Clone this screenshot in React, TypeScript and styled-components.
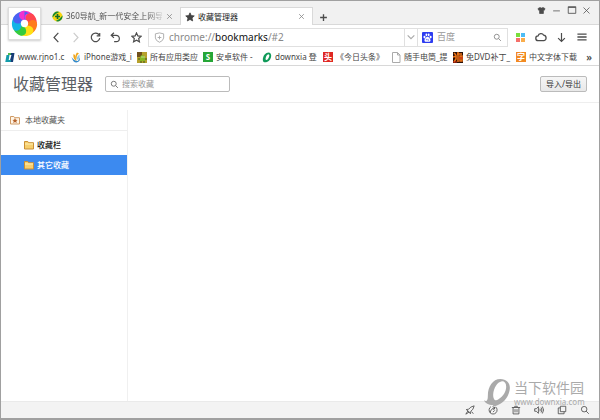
import React from 'react';
import styled, { createGlobalStyle, css } from 'styled-components';

const Global = createGlobalStyle`
  * { box-sizing: border-box; }
  body { margin: 0; background: #fff; }
  body, button, input {
    font-family: "Noto Sans", "Noto Sans CJK SC", sans-serif;
    font-size: 8px;
    line-height: 12px;
    color: #444;
  }
  button { padding: 0; border: 0; background: none; }
  svg { display: block; flex: none; }
`;

const Window = styled.div`
  position: relative;
  display: flex;
  flex-direction: column;
  min-height: 100vh;
  border: 1px solid #a0a0a0;
  border-bottom-width: 2px;
  background: #fff;
`;

const TabStrip = styled.div`
  display: flex;
  align-items: flex-end;
  height: 24px;
  padding-left: 45px;
  background: #f1f1f1;
  box-shadow: inset 0 -1px #d9d9d9;
`;

const Tab = styled.div<{ $active?: boolean }>`
  display: flex;
  align-items: center;
  gap: 3px;
  flex: 0 1 134px;
  min-width: 0;
  height: 18px;
  padding: 0 7px 0 6px;
  ${p => p.$active && css`
    flex-basis: 133px;
    padding-left: 4px;
    background: #fff;
    border: 1px solid #d9d9d9;
    border-bottom: 0;
  `}
`;

const TabTitle = styled.span<{ $fade?: boolean }>`
  flex: 1;
  min-width: 0;
  white-space: nowrap;
  color: ${p => (p.$fade ? '#555' : '#222')};
  ${p => p.$fade && css`mask-image: linear-gradient(90deg, #000 84%, #0003);`}
`;

const IconButton = styled.button<{ $w?: number }>`
  display: flex;
  align-items: center;
  justify-content: center;
  flex: none;
  width: ${p => p.$w ?? 20}px;
  height: 16px;
  color: #4c4c4c;
  &:disabled { color: #ccc; }
`;

const CloseTab = styled(IconButton)`
  color: #888;
`;

const SiteInfo = styled(IconButton)`
  color: #aaa;
`;

const WindowControls = styled.div`
  display: flex;
  align-self: flex-start;
  margin-left: auto;
  padding: 1px 5px 0 0;
`;

const Launcher = styled.button`
  position: absolute;
  top: 6px;
  left: 7px;
  display: grid;
  place-items: center;
  width: 33px;
  height: 33px;
  background: #fff;
  border: 1px solid #ddd;
  box-shadow: 0 1px 2px #0003;
`;

const Toolbar = styled.div`
  display: flex;
  align-items: center;
  height: 24px;
  padding: 0 7px 0 45px;
`;

const Omnibox = styled.div`
  display: flex;
  align-items: center;
  flex: 1;
  min-width: 0;
  height: 19px;
  margin-left: 2px;
  padding-left: 4px;
  gap: 4px;
  border: 1px solid #e0e0e0;
`;

const Address = styled.div`
  flex: 1;
  font-size: 10px;
  line-height: 16px;
  color: #888;
  white-space: nowrap;
  b { font-weight: 400; color: #111; }
`;

const DropButton = styled(IconButton)`
  height: 17px;
  color: #aaa;
  border-left: 1px solid #e0e0e0;
`;

const EngineBox = styled.label`
  display: flex;
  align-items: center;
  width: 91px;
  height: 19px;
  padding: 0 5px 0 4px;
  gap: 4px;
  border: 1px solid #e0e0e0;
  margin-left: -1px;
  color: #888;
`;

const PlainInput = styled.input<{ $size?: number }>`
  flex: 1;
  width: 0;
  min-width: 0;
  padding: 0;
  border: 0;
  outline: 0;
  background: none;
  font-size: ${p => p.$size ?? 8}px;
  &::placeholder { color: #999; opacity: 1; }
`;

const BookmarkBar = styled.nav`
  display: flex;
  align-items: center;
  height: 17px;
  padding-left: 4px;
  border-bottom: 1px solid #d8d8d8;
`;

const Bookmark = styled.a<{ $w: number }>`
  display: flex;
  align-items: center;
  gap: 3px;
  flex: 0 1 ${p => p.$w}px;
  min-width: 0;
  padding-right: 5px;
  overflow: hidden;
  white-space: nowrap;
  text-decoration: none;
  color: #444;
`;

const MoreButton = styled(IconButton)`
  font-size: 10px;
  font-weight: 600;
`;

const PageHeader = styled.header`
  display: flex;
  align-items: center;
  height: 37px;
  padding: 0 12px;
  border-bottom: 1px solid #eee;
`;

const Title = styled.h1`
  margin: 0 12px 0 0;
  font-size: 16px;
  line-height: 24px;
  font-weight: 400;
  color: #5c6166;
`;

const SearchBox = styled.label`
  display: flex;
  align-items: center;
  gap: 3px;
  flex: 0 1 125px;
  min-width: 0;
  height: 16px;
  padding: 0 4px;
  border: 1px solid #bbb;
  border-radius: 2px;
  color: #777;
`;

const ImportButton = styled.button`
  height: 16px;
  margin-left: auto;
  padding: 0 5px;
  border: 1px solid #bbb;
  border-radius: 2px;
  background: linear-gradient(#f6f6f6, #e8e8e8);
  color: #333;
`;

const Body = styled.main`
  display: flex;
  flex: 1;
  padding-top: 7px;
`;

const Sidebar = styled.aside`
  width: 127px;
  border-right: 1px solid #f0f0f0;
`;

const Root = styled.div`
  display: flex;
  align-items: center;
  gap: 5px;
  height: 21px;
  padding-left: 9px;
  margin-bottom: 4px;
  border-bottom: 1px solid #eee;
  color: #555;
`;

const Folder = styled.button<{ $selected?: boolean }>`
  display: flex;
  align-items: center;
  gap: 3px;
  width: 100%;
  height: 20px;
  padding-left: 23px;
  font-weight: 500;
  color: ${p => (p.$selected ? '#fff' : '#111')};
  background: ${p => (p.$selected ? '#3c8af0' : 'none')};
`;

const StatusBar = styled.footer`
  display: flex;
  align-items: center;
  justify-content: flex-end;
  height: 17px;
  padding-right: 3px;
  border-top: 1px solid #eaeaea;
  background: #f3f3f3;
`;

const Watermark = styled.div`
  position: absolute;
  right: 13px;
  bottom: 11px;
  display: flex;
  align-items: flex-start;
  gap: 3px;
  color: #aaa;
  pointer-events: none;
`;

const WatermarkText = styled.div`
  display: flex;
  flex-direction: column;
  width: 72px;
  font-size: 14px;
  line-height: 18px;
  small { font-size: 8px; line-height: 10px; }
`;

type StrokeProps = { d: string; size?: number; width?: number; fill?: string };
const Glyph = ({ d, size = 12, width = 1, fill = 'none' }: StrokeProps) => (
  <svg width={size} height={size} viewBox="0 0 12 12" fill={fill} stroke="currentColor" strokeWidth={width} aria-hidden="true">
    <path d={d} />
  </svg>
);

const paths = {
  back: 'M8 1 3.3 6 8 11',
  forward: 'M4 1 8.7 6 4 11',
  reload: 'M10 3.2A4.7 4.7 0 1 0 10.7 6.8M10.6 1v3.3H7.3',
  undo: 'M4.3.8 1.3 3.6l3 2.8M1.5 3.6h5.2a3.5 3.5 0 0 1 0 7H4.5',
  star: 'm6 1 1.5 3.3 3.6.4-2.7 2.4.8 3.6L6 8.9l-3.2 1.8.8-3.6L.9 4.7l3.6-.4Z',
  shield: 'M6 1 10.5 2v4.5Q10 9.7 6 11.2 2 9.7 1.5 6.5V2ZM6 4v4M4 6h4',
  down: 'M2 4l4 4 4-4',
  search: 'M8.3 5A3.3 3.3 0 1 1 1.7 5a3.3 3.3 0 0 1 6.6 0ZM7.4 7.4 10.5 10.5',
  cloud: 'M3.3 9.7a2.4 2.4 0 0 1-.2-4.800A3 3 0 0 1 8.700 4.200a2.800 2.800 0 0 1 .2 5.500Z',
  download: 'M6 1v9.3M2.3 6.600 6 10.300l3.700-3.700',
  menu: 'M.5 2.500h11M.5 6h11M.5 9.500h11',
  close: 'm2 2 8 8M10 2l-8 8',
  plus: 'M6 1.500v9M1.500 6h9',
  minus: 'M1.500 6.500h9',
  max: 'M1.500 2h9v8h-9ZM1.500 3h9',
  shirt: 'M4 2 1.300 3.500l1 2.200L3.500 5.300V10h5V5.300l1.200.4 1-2.200L8 2Q6 3.600 4 2Z',
  rocket: 'M11 1 7 2.500 4.500 5 1.500 5.500 3.500 7 5 8.500 6.500 10.500 7 7.500 9.500 5ZM3.500 7l-2.500 4L5 8.500M8 8 10 10.500',
  speed: 'M3.500 2A4.800 4.800 0 1 0 9 2.200M2.500 9.500C3 6 5 4 8 3.500M5.500 2 8.500 3.300 6.500 6M6 8.500l2-2',
  trash: 'M1 3h10M4.500 3V1.500h3V3M2.500 3v7.700h7V3M4.800 5v3.800M7.200 5v3.800',
  sound: 'M.8 4.500h2L5.300 2v8L2.800 7.500h-2ZM7 4.500q1 1.500 0 3M8.500 3q2 3 0 6M10 1.800q3 4.200 0 8.400',
  windows: 'M4 1.500h6.500V8H4ZM4 3.500H1.500v7h7V8',
};

const petals = ['#f22fd0', '#ff4650', '#ff7b1c', '#ffe016', '#35cb3c', '#12b4e6', '#4a62f2'];
const Pinwheel = () => (
  <svg width="27" height="27" viewBox="-14 -14 28 28" aria-hidden="true">
    {petals.map((c, i) => (
      <path key={c} fill={c} transform={`rotate(${(i * 360) / petals.length})`} d="M0-3C-6-4-8-11-2-13 5-14 11-9 11-3 9-6 5-6 3 0Z" />
    ))}
    <path fill={petals[0]} d="M0-3C-6-4-8-11-2-13L0-13.200Z" />
    <circle r="3.800" fill="#fff" />
  </svg>
);

const Favicon360 = () => (
  <svg width="11" height="11" viewBox="0 0 12 12" aria-hidden="true">
    <circle cx="6" cy="6" r="5.500" fill="#f7d510" />
    <path d="M.6 7A5.500 5.500 0 0 1 8 1Q3.500 2.500.6 7ZM11.400 5A5.500 5.500 0 0 1 4 11Q8.500 9.500 11.400 5Z" fill="#188a35" />
    <path d="M6 3.300v5.400M3.300 6h5.400" stroke="#126b2c" strokeWidth="1.800" />
  </svg>
);

const Paw = () => (
  <svg width="11" height="11" viewBox="0 0 12 12" aria-hidden="true">
    <rect width="12" height="12" rx="1" fill="#2d3cf0" />
    <g fill="#fff">
      <ellipse cx="2.700" cy="5.500" rx="1.100" ry="1.500" /><ellipse cx="4.800" cy="3" rx="1" ry="1.500" />
      <ellipse cx="7.300" cy="3" rx="1" ry="1.500" /><ellipse cx="9.400" cy="5.500" rx="1.100" ry="1.500" />
      <path d="M6 5.300C7.500 5.300 9.500 8 9.300 9.500 9 11 7.500 10.500 6 10.500S3 11 2.700 9.500C2.500 8 4.500 5.300 6 5.300Z" />
    </g>
    <path d="M4.800 7.500v1.500M6.500 7.500v1.500h1" stroke="#2d3cf0" fill="none" strokeWidth=".7" />
  </svg>
);

const Tiles = () => (
  <svg width="9" height="9" viewBox="0 0 9 9" aria-hidden="true">
    <path fill="#7ade3c" d="M0 0h4v4H0z" /><path fill="#4cbcf5" d="M5 0h4v4H5z" />
    <path fill="#f5706a" d="M0 5h4v4H0z" /><path fill="#f9ad4c" d="M5 5h4v4H5z" />
  </svg>
);

const FolderIcon = ({ star }: { star?: boolean }) => (
  <svg width="10" height="10" viewBox="0 0 10 10" aria-hidden="true">
    <path d="M.5 1.500h3.300l.8 1.200h4.900v6.300h-9Z" fill={star ? '#fff6e8' : '#f7cf6d'} stroke={star ? '#d09a64' : '#c98f35'} />
    {star
      ? <path d="m5 3 .8 1.700 1.800.2-1.300 1.200.4 1.800L5 7l-1.700.9.4-1.800-1.300-1.200 1.800-.2Z" fill="#b5622a" />
      : <path d="M1 4h8" stroke="#fff0b8" />}
  </svg>
);

const Tile = styled.span<{ $bg: string }>`
  display: grid;
  place-items: center;
  flex: none;
  width: 10px;
  height: 10px;
  font-size: 8px;
  line-height: 10px;
  font-weight: 700;
  color: #fff;
  background: ${p => p.$bg};
`;

const Site = ({ children }: { children: React.ReactNode }) => (
  <svg width="10" height="11" viewBox="0 0 10 11" aria-hidden="true">{children}</svg>
);

const bookmarks = [
  { w: 66, label: 'www.rjno1.c', icon: <Site><path d="M3 1h6.500L8 10H4.500L6.500 3H3Z" fill="#173d78" /><path d="M1.500 3h3L3.700 8H6l-.3 2H.3Z" fill="#159cab" /><path d="M3 1h3L5.500 3H3Z" fill="#55b94b" /></Site> },
  { w: 66, label: 'iPhone游戏_i', icon: <Site><path d="M.5 5q1.500 5.500 5 5.500 4.500-1 3-5L7 9Q3 9 .5 5Z" fill="#3289cb" /><path d="M2.500 2q-1 5 3 7L4 3ZM6 .5Q3 4 6 8 4.500 4 8 1.500Z" fill="#efa51b" /><path d="M8.500 2.500Q5 5 6 8l2.500-2Z" fill="#8fc6e6" /></Site> },
  { w: 66, label: '所有应用类应', icon: <Site><path d="M0 0h10v11H0z" fill="#b7a12d" /><path d="M0 0h5v5H0z" fill="#70501d" /><path d="M3 5q2-4 5 0v4H3Z" fill="#86b825" /><path d="M4 9v2M7 9v2M2 6v2M9 6v2" stroke="#375c13" /><path d="M4.500 5h1M6.500 5h1" stroke="#fff" /></Site> },
  { w: 59, label: '安卓软件 -', icon: <Tile $bg="#26a637">S</Tile> },
  { w: 61, label: 'downxia 登', icon: <Site><path fillRule="evenodd" d="M6.500.5C11 1 9.500 8.500 5 10Q0 11.500 1 6 2 1 6.500.5ZM6.500 2.200Q4 3 3.500 7 4 9 6 7 8.500 3 6.500 2.200Z" fill="#109a59" /></Site> },
  { w: 68, label: '《今日头条》', icon: <Tile $bg="#df2722">头</Tile> },
  { w: 62, label: '随手电筒_提', icon: <Site><path d="M1.500.5h5L9 3v7.500H1.500ZM6.500.5V3H9" fill="none" stroke="#aaa" /></Site> },
  { w: 63, label: '免DVD补丁_', icon: <Site><path d="M0 0h10v11H0z" fill="#291108" /><path d="m1 1 2 2M0 5l3-1v3l-2 3M4 2h5M5 0v10M7 4h2v5H7Z" stroke="#f27618" strokeWidth="1.500" fill="none" /><path d="M6 6h4M0 10h4" stroke="#d72a14" /></Site> },
  { w: 63, label: '中文字体下载', icon: <Tile $bg="#f28a22">字</Tile> },
];

const navButtons = [
  { name: '后退', d: paths.back, w: 20 },
  { name: '前进', d: paths.forward, w: 19, disabled: true },
  { name: '刷新', d: paths.reload, w: 20 },
  { name: '恢复', d: paths.undo, w: 21 },
  { name: '收藏', d: paths.star, w: 20 },
];

const statusButtons = [
  ['加速', paths.rocket], ['清理', paths.speed], ['回收站', paths.trash],
  ['声音', paths.sound], ['窗口', paths.windows], ['缩放', paths.search],
];

export default function App() {
  return (
    <>
      <Global />
      <Window>
        <TabStrip>
          <Tab>
            <Favicon360 />
            <TabTitle $fade>360导航_新一代安全上网导</TabTitle>
            <CloseTab $w={8} aria-label="关闭标签"><Glyph d={paths.close} size={7} width={1.4} /></CloseTab>
          </Tab>
          <Tab $active>
            <Glyph d={paths.star} size={10} fill="currentColor" />
            <TabTitle>收藏管理器</TabTitle>
            <CloseTab $w={8} aria-label="关闭标签"><Glyph d={paths.close} size={7} width={1.4} /></CloseTab>
          </Tab>
          <IconButton aria-label="新标签"><Glyph d={paths.plus} size={9} width={1.8} /></IconButton>
          <WindowControls>
            <IconButton $w={15} aria-label="皮肤"><Glyph d={paths.shirt} size={9} fill="currentColor" /></IconButton>
            <IconButton $w={15} aria-label="最小化"><Glyph d={paths.minus} size={9} /></IconButton>
            <IconButton $w={15} aria-label="最大化"><Glyph d={paths.max} size={10} /></IconButton>
            <IconButton $w={15} aria-label="关闭"><Glyph d={paths.close} size={9} /></IconButton>
          </WindowControls>
        </TabStrip>
        <Toolbar>
          {navButtons.map(b => (
            <IconButton key={b.name} $w={b.w} disabled={b.disabled} aria-label={b.name}><Glyph d={b.d} size={11} width={1.3} /></IconButton>
          ))}
          <Omnibox>
            <SiteInfo $w={12} aria-label="网站信息"><Glyph d={paths.shield} size={11} /></SiteInfo>
            <Address>chrome://<b>bookmarks</b>/#2</Address>
            <DropButton $w={13} aria-label="历史地址"><Glyph d={paths.down} size={10} width={1.4} /></DropButton>
          </Omnibox>
          <EngineBox>
            <Paw />
            <PlainInput $size={9} placeholder="百度" aria-label="百度" />
            <Glyph d={paths.search} size={9} width={1.2} />
          </EngineBox>
          <IconButton $w={24} aria-label="应用"><Tiles /></IconButton>
          <IconButton $w={18} aria-label="云同步"><Glyph d={paths.cloud} size={12} width={1.3} /></IconButton>
          <IconButton $w={22} aria-label="下载"><Glyph d={paths.download} size={11} width={1.3} /></IconButton>
          <IconButton $w={20} aria-label="菜单"><Glyph d={paths.menu} size={10} width={1.6} /></IconButton>
        </Toolbar>
        <BookmarkBar>
          {bookmarks.map(b => (
            <Bookmark key={b.label} href="#" $w={b.w}>{b.icon}{b.label}</Bookmark>
          ))}
          <MoreButton $w={20} aria-label="更多">»</MoreButton>
        </BookmarkBar>
        <PageHeader>
          <Title>收藏管理器</Title>
          <SearchBox>
            <Glyph d={paths.search} size={9} width={1.3} />
            <PlainInput placeholder="搜索收藏" aria-label="搜索收藏" />
          </SearchBox>
          <ImportButton>导入/导出</ImportButton>
        </PageHeader>
        <Body>
          <Sidebar>
            <Root><FolderIcon star />本地收藏夹</Root>
            <Folder><FolderIcon />收藏栏</Folder>
            <Folder $selected><FolderIcon />其它收藏</Folder>
          </Sidebar>
        </Body>
        <StatusBar>
          {statusButtons.map(([name, d]) => (
            <IconButton key={name} $w={23} aria-label={name}><Glyph d={d} size={10} /></IconButton>
          ))}
        </StatusBar>
        <Launcher aria-label="浏览器主页"><Pinwheel /></Launcher>
        <Watermark>
          <svg width="27" height="28" viewBox="0 0 28 29" aria-hidden="true">
            <path fill="currentColor" fillRule="evenodd" d="M17 0C24 0 28 5 26.500 12 25 20 19 26 12 28Q10 29 9 27C5 27 1 25 0 22 3 24 4 22 4 17 4 8 9 0 17 0ZM18 2.500C14 3 10 9 9.500 16 9.500 22 12 23 15 21 20 18 23 13 23 8 23 4 21 2 18 2.500Z" />
          </svg>
          <WatermarkText>当下软件园<small>www.downxia.com</small></WatermarkText>
        </Watermark>
      </Window>
    </>
  );
}
